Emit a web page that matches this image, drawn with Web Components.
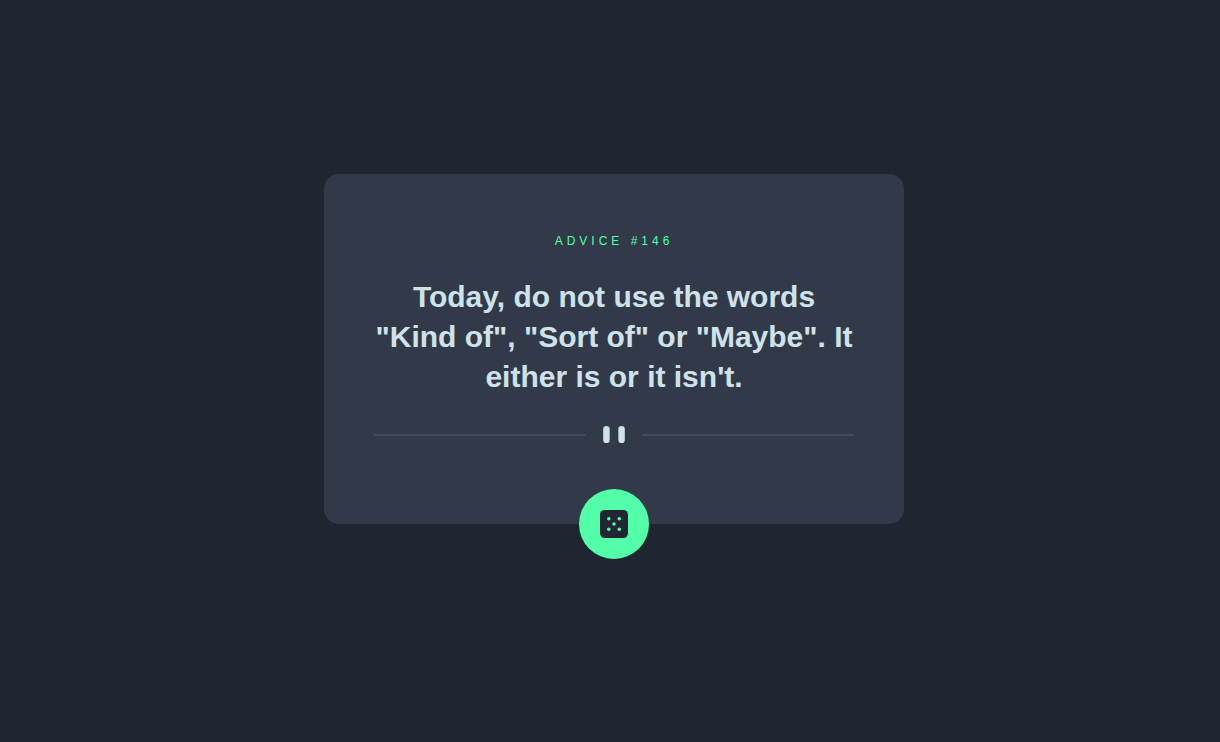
<!DOCTYPE html>
<html lang="en">
<head>
<meta charset="utf-8">
<meta name="viewport" content="width=device-width, initial-scale=1">
<title>Advice generator</title>
<style>
  body {
    margin: 0;
    background: #1f2632;
    font-family: "Liberation Sans", Arial, sans-serif;
  }
</style>
</head>
<body>
<advice-page>
  <advice-card>
    <span slot="label">Advice #146</span>
    <span slot="text">Today, do not use the words "Kind of", "Sort of" or "Maybe". It either is or it isn't.</span>
    <dice-button slot="action"></dice-button>
  </advice-card>
</advice-page>

<script>
  class AdvicePage extends HTMLElement {
    constructor() {
      super();
      this.attachShadow({ mode: "open" }).innerHTML = `
        <style>
          :host { display: block; }
          main {
            box-sizing: border-box;
            min-height: 100vh;
            display: flex;
            align-items: center;
            justify-content: center;
            padding: 0 0 44px 8px;
          }
        </style>
        <main><slot></slot></main>`;
    }
  }

  class PatternDivider extends HTMLElement {
    constructor() {
      super();
      this.attachShadow({ mode: "open" }).innerHTML = `
        <style>
          :host { display: block; }
          svg { display: block; width: 100%; }
        </style>
        <svg viewBox="0 0 444 16" aria-hidden="true">
          <path fill="#414b5d" d="M0 7.4h196v1.85H0zM248 7.4h196v1.85H248z"/>
          <g fill="#cee3e9">
            <rect x="212" width="6" height="16" rx="3"/>
            <rect x="226" width="6" height="16" rx="3"/>
          </g>
        </svg>`;
    }
  }

  class DiceButton extends HTMLElement {
    constructor() {
      super();
      this.attachShadow({ mode: "open" }).innerHTML = `
        <style>
          :host { display: block; }
          button {
            display: flex;
            align-items: center;
            justify-content: center;
            width: 70px;
            height: 70px;
            padding: 0;
            border: 0;
            border-radius: 50%;
            background: #52ffa8;
            cursor: pointer;
          }
          button:hover { box-shadow: 0 0 32px #52ffa8; }
          svg { display: block; width: 28px; height: 28px; }
        </style>
        <button type="button" aria-label="New advice">
          <svg viewBox="0 0 24 24" aria-hidden="true">
            <rect width="24" height="24" rx="4" fill="#202733"/>
            <g fill="#52ffa8">
              <circle cx="7.5" cy="7.5" r="1.5"/>
              <circle cx="16.5" cy="7.5" r="1.5"/>
              <circle cx="12" cy="12" r="1.5"/>
              <circle cx="7.5" cy="16.5" r="1.5"/>
              <circle cx="16.5" cy="16.5" r="1.5"/>
            </g>
          </svg>
        </button>`;
    }
  }

  class AdviceCard extends HTMLElement {
    constructor() {
      super();
      this.attachShadow({ mode: "open" }).innerHTML = `
        <style>
          :host { display: block; width: 100%; max-width: 580px; }
          article {
            display: flex;
            flex-direction: column;
            align-items: center;
            padding: 59px 50px 0;
            border-radius: 15px;
            background: #323a49;
            text-align: center;
          }
          h1 {
            margin: 0 0 28px;
            color: #52ffa8;
            font-size: 12px;
            font-weight: 400;
            line-height: 16px;
            letter-spacing: 4px;
            text-transform: uppercase;
          }
          p {
            margin: 0 0 29px;
            color: #cee3e9;
            font-size: 30px;
            font-weight: 700;
            line-height: 40px;
          }
          pattern-divider { width: 100%; margin-bottom: 46px; }
          .action { margin-bottom: -35px; }
        </style>
        <article>
          <h1><slot name="label"></slot></h1>
          <p><slot name="text"></slot></p>
          <pattern-divider></pattern-divider>
          <div class="action"><slot name="action"></slot></div>
        </article>`;
    }
  }

  customElements.define("pattern-divider", PatternDivider);
  customElements.define("dice-button", DiceButton);
  customElements.define("advice-card", AdviceCard);
  customElements.define("advice-page", AdvicePage);
</script>
</body>
</html>
